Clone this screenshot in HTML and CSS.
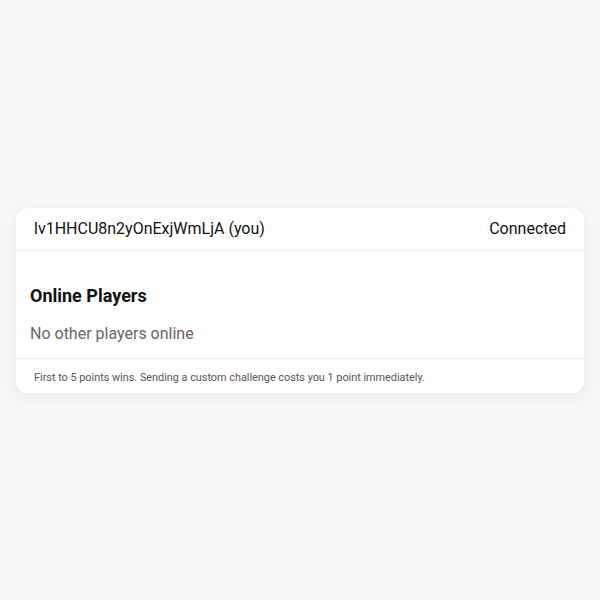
FILE: index.html
```html
<!DOCTYPE html>
<html>
<head>
<meta charset="utf-8">
<link rel="stylesheet" href="styles.css">
</head>
<body>
<main class="page">
  <section class="card">
    <header class="card-header">
      <span class="player-id">lv1HHCU8n2yOnExjWmLjA (you)</span>
      <span class="status">Connected</span>
    </header>
    <div class="card-body">
      <h2 class="title">Online Players</h2>
      <p class="empty">No other players online</p>
    </div>
    <footer class="card-footer">First to 5 points wins. Sending a custom challenge costs you 1 point immediately.</footer>
  </section>
</main>
</body>
</html>
```
FILE: styles.css
```css
html, body {
  margin: 0;
  padding: 0;
  background: #f5f6f8;
  font-family: Roboto, "Liberation Sans", sans-serif;
}
.page {
  height: 600px;
  display: flex;
  align-items: center;
  padding: 0 16px;
  box-sizing: border-box;
}
.card {
  width: 100%;
  background: #fff;
  border-radius: 12px;
  box-shadow: 0 4px 18px rgba(0, 0, 0, 0.06);
  overflow: hidden;
}
.card-header {
  display: flex;
  justify-content: space-between;
  align-items: center;
  padding: 9px 18px;
  line-height: 24px;
  font-size: 16px;
  color: #111;
  border-bottom: 1px solid #ececee;
}
.card-body {
  padding: 33px 14px 12px;
}
.title {
  margin: 0;
  font-size: 18px;
  font-weight: 700;
  line-height: 24px;
  color: #111;
}
.empty {
  margin: 14px 0 0;
  font-size: 16px;
  line-height: 24px;
  color: #666;
}
.card-footer {
  padding: 12px 18px 8px;
  font-size: 10.85px;
  line-height: 14px;
  color: #555;
  border-top: 1px solid #ececee;
}
```
